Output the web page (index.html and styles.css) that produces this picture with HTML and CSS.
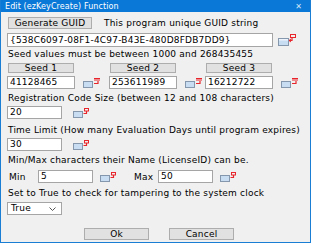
FILE: index.html
```html
<!DOCTYPE html>
<html>
<head>
<meta charset="utf-8">
<link rel="stylesheet" href="styles.css">
</head>
<body>
<div class="window">
  <div class="titlebar">
    <span class="title">Edit (ezKeyCreate) Function</span>
    <span class="close">✕</span>
  </div>
  <div class="content">
    <div class="row r-gen">
      <div class="btn btn-gen">Generate GUID</div>
      <span class="gen-label">This program unique GUID string</span>
    </div>
    <div class="row r-guid">
      <div class="input guid">{538C6097-08F1-4C97-B43E-480D8FDB7DD9}</div>
      <svg class="ico ico-guid" width="19" height="12" viewBox="0 0 19 12"><rect x="0.5" y="4.5" width="10" height="7" fill="#c9ddf2" stroke="#8497ad"/><rect x="1" y="5" width="9" height="1.5" fill="#eef4fb"/><rect x="12.5" y="0.5" width="5" height="3" fill="none" stroke="#e8252a"/><path d="M14 3.5 v3 h-3" fill="none" stroke="#e8252a" stroke-width="1.2"/><path d="M11 6.5 l2 -1.5 M11 6.5 l2 1.5" stroke="#e8252a"/></svg>
    </div>
    <div class="text t-seed">Seed values must be between 1000 and 268435455</div>
    <div class="seeds">
      <div class="seed">
        <div class="btn btn-seed">Seed 1</div>
        <div class="pair"><div class="input in-seed">41128465</div><svg class="ico" width="17" height="10" viewBox="0 0 17 10"><rect x="0.5" y="3.5" width="9" height="6" fill="#c9ddf2" stroke="#8497ad"/><path d="M11 0.5 h6 M12 0 v3 M14 0 v3 M16 0 v3" stroke="#e8252a"/><path d="M15 3 v2.5 h-4" fill="none" stroke="#e8252a" stroke-width="1.2"/></svg></div>
      </div>
      <div class="seed">
        <div class="btn btn-seed">Seed 2</div>
        <div class="pair"><div class="input in-seed">253611989</div><svg class="ico" width="17" height="10" viewBox="0 0 17 10"><rect x="0.5" y="3.5" width="9" height="6" fill="#c9ddf2" stroke="#8497ad"/><path d="M11 0.5 h6 M12 0 v3 M14 0 v3 M16 0 v3" stroke="#e8252a"/><path d="M15 3 v2.5 h-4" fill="none" stroke="#e8252a" stroke-width="1.2"/></svg></div>
      </div>
      <div class="seed">
        <div class="btn btn-seed">Seed 3</div>
        <div class="pair"><div class="input in-seed">16212722</div><svg class="ico" width="17" height="10" viewBox="0 0 17 10"><rect x="0.5" y="3.5" width="9" height="6" fill="#c9ddf2" stroke="#8497ad"/><path d="M11 0.5 h6 M12 0 v3 M14 0 v3 M16 0 v3" stroke="#e8252a"/><path d="M15 3 v2.5 h-4" fill="none" stroke="#e8252a" stroke-width="1.2"/></svg></div>
      </div>
    </div>
    <div class="text t-reg">Registration Code Size (between 12 and 108 characters)</div>
    <div class="row r-small">
      <div class="input in-small">20</div>
      <svg class="ico ico-small" width="17" height="10" viewBox="0 0 17 10"><rect x="0.5" y="3.5" width="9" height="6" fill="#c9ddf2" stroke="#8497ad"/><rect x="11.5" y="0.5" width="4" height="2.5" fill="none" stroke="#e8252a"/><path d="M13.5 3 v2.5 h-3" fill="none" stroke="#e8252a" stroke-width="1.2"/></svg>
    </div>
    <div class="text t-time">Time Limit (How many Evaluation Days until program expires)</div>
    <div class="row r-small">
      <div class="input in-small">30</div>
      <svg class="ico ico-small" width="17" height="10" viewBox="0 0 17 10"><rect x="0.5" y="3.5" width="9" height="6" fill="#c9ddf2" stroke="#8497ad"/><rect x="11.5" y="0.5" width="4" height="2.5" fill="none" stroke="#e8252a"/><path d="M13.5 3 v2.5 h-3" fill="none" stroke="#e8252a" stroke-width="1.2"/></svg>
    </div>
    <div class="text t-minmax">Min/Max characters their Name (LicenseID) can be.</div>
    <div class="row r-minmax">
      <span class="lbl lbl-min">Min</span>
      <div class="input in-small">5</div>
      <svg class="ico ico-mm" width="17" height="10" viewBox="0 0 17 10"><rect x="0.5" y="3.5" width="9" height="6" fill="#c9ddf2" stroke="#8497ad"/><rect x="11.5" y="0.5" width="4" height="2.5" fill="none" stroke="#e8252a"/><path d="M13.5 3 v2.5 h-3" fill="none" stroke="#e8252a" stroke-width="1.2"/></svg>
      <span class="lbl lbl-max">Max</span>
      <div class="input in-small">50</div>
      <svg class="ico ico-mm" width="17" height="10" viewBox="0 0 17 10"><rect x="0.5" y="3.5" width="9" height="6" fill="#c9ddf2" stroke="#8497ad"/><rect x="11.5" y="0.5" width="4" height="2.5" fill="none" stroke="#e8252a"/><path d="M13.5 3 v2.5 h-3" fill="none" stroke="#e8252a" stroke-width="1.2"/></svg>
    </div>
    <div class="text t-set">Set to True to check for tampering to the system clock</div>
    <div class="select"><span>True</span><svg width="7" height="4" viewBox="0 0 7 4"><path d="M0.5 0.5 L3.5 3.5 L6.5 0.5" fill="none" stroke="#555"/></svg></div>
    <div class="actions">
      <div class="btn btn-act">Ok</div>
      <div class="btn btn-act">Cancel</div>
    </div>
  </div>
</div>
</body>
</html>
```
FILE: styles.css
```css
html, body {
  margin: 0;
  padding: 0;
  background: #f0f0f0;
}
.window {
  width: 311px;
  height: 243px;
  box-sizing: border-box;
  border: 1px solid #1a7fd4;
  border-top: none;
  background: #f0f0f0;
  font-family: "DejaVu Sans", Verdana, sans-serif;
  font-size: 9px;
  letter-spacing: 0.2px;
  color: #000;
  overflow: hidden;
}
.titlebar {
  height: 12px;
  background: #0a78d7;
  color: #fff;
  display: flex;
  align-items: center;
  justify-content: space-between;
  padding: 0 9px 0 5px;
  margin: 0 -1px;
  font-size: 8px;
  letter-spacing: 0.1px;
}
.close {
  font-size: 8px;
  color: #cfe5f8;
}
.content {
  padding: 0 0 0 6px;
  display: flex;
  flex-direction: column;
  align-items: flex-start;
}
.row {
  display: flex;
  align-items: center;
}
.btn {
  box-sizing: border-box;
  background: #e1e1e1;
  border: 1px solid #adadad;
  display: flex;
  align-items: center;
  justify-content: center;
  line-height: 1;
}
.input {
  box-sizing: border-box;
  background: #fff;
  border: 1px solid #a5a5a5;
  display: flex;
  align-items: center;
  padding-left: 2px;
  line-height: 1;
  white-space: nowrap;
  overflow: hidden;
}
.r-gen {
  margin-top: 5px;
  height: 12px;
}
.btn-gen {
  width: 84px;
  height: 12px;
  margin-left: 1px;
}
.gen-label {
  margin-left: 12px;
}
.r-guid {
  margin-top: 4px;
}
.guid {
  width: 266px;
  height: 14px;
}
.ico-guid {
  margin-left: 5px;
}
.text {
  height: 9px;
  line-height: 9px;
  margin-left: 1px;
  white-space: nowrap;
}
.t-seed { margin-top: 3px; }
.seeds {
  margin-top: 4px;
  display: grid;
  grid-template-columns: 102px 96px 96px;
}
.seed {
  display: flex;
  flex-direction: column;
  align-items: flex-start;
}
.btn-seed {
  width: 66px;
  height: 10px;
  margin-left: 1px;
}
.pair {
  margin-top: 3px;
  display: flex;
  align-items: center;
}
.in-seed {
  width: 68px;
  height: 13px;
}
.pair .ico {
  margin-left: 8px;
}
.t-reg { margin-top: 5px; }
.r-small {
  margin-top: 3px;
}
.in-small {
  width: 55px;
  height: 13px;
}
.ico-small {
  margin-left: 11px;
}
.t-time { margin-top: 7px; }
.t-minmax { margin-top: 5px; }
.r-minmax {
  margin-top: 5px;
}
.lbl-min {
  width: 31px;
  padding-left: 2px;
  box-sizing: border-box;
}
.ico-mm {
  margin-left: 7px;
}
.lbl-max {
  margin-left: 17px;
  width: 24px;
}
.t-set { margin-top: 6px; }
.select {
  margin-top: 4px;
  box-sizing: border-box;
  width: 55px;
  height: 13px;
  background: #fff;
  border: 1px solid #a5a5a5;
  display: flex;
  align-items: center;
  justify-content: space-between;
  padding: 0 5px 0 3px;
  line-height: 1;
}
.actions {
  margin-top: 13px;
  margin-left: 77px;
  display: flex;
  gap: 20px;
}
.btn-act {
  width: 65px;
  height: 12px;
}
```
